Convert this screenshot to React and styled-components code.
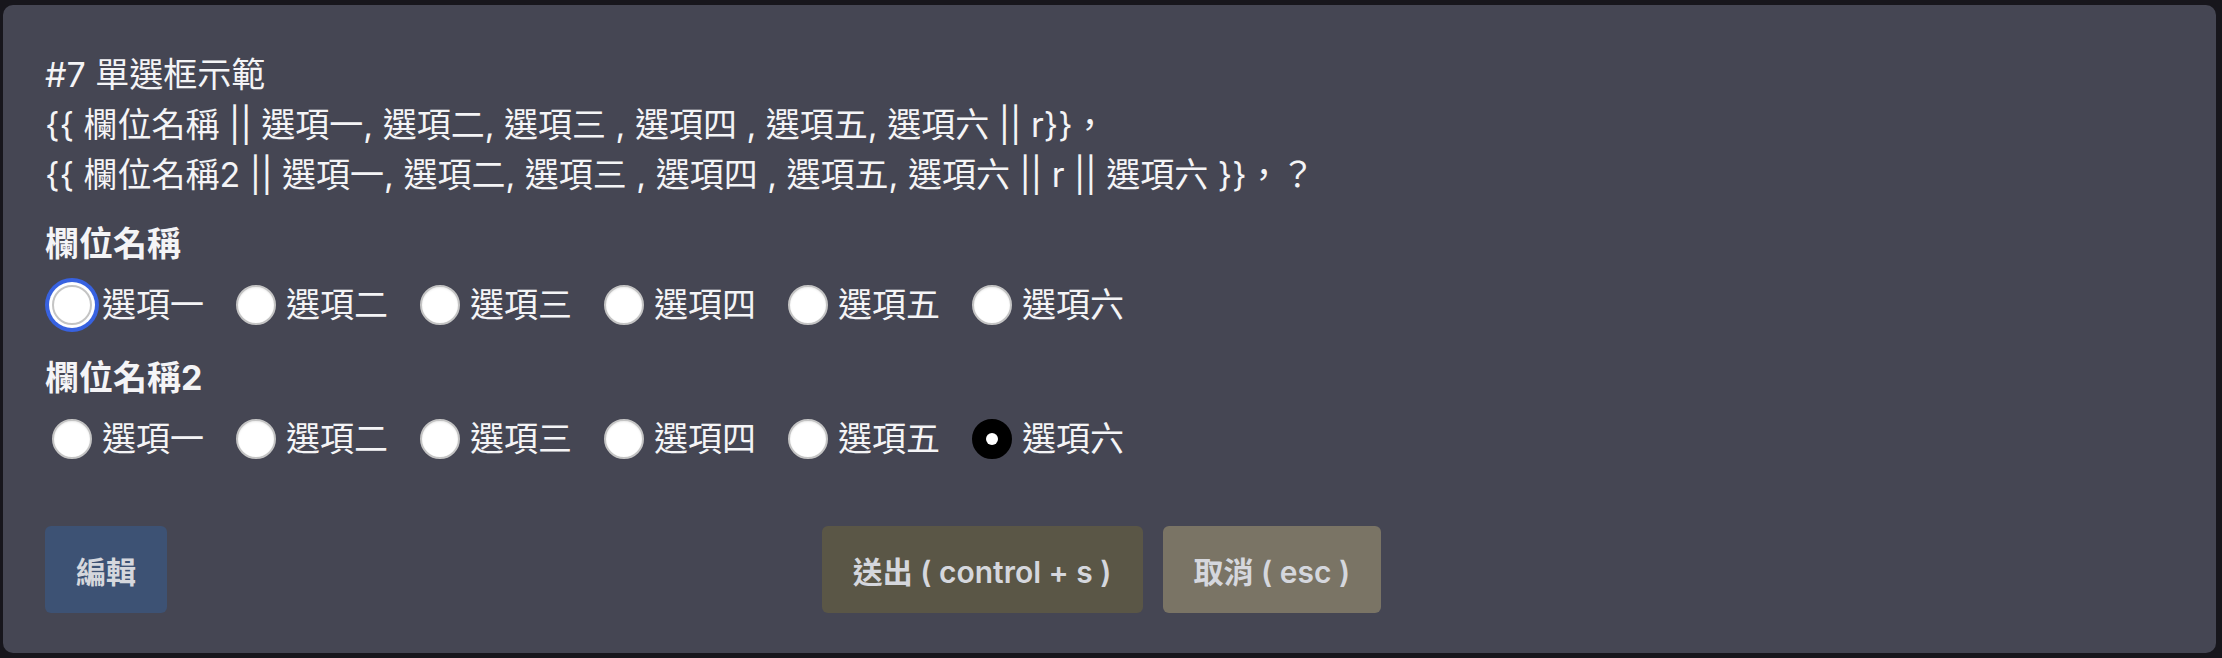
import React from "react";
import styled, { createGlobalStyle } from "styled-components";

const GlobalStyle = createGlobalStyle`
	html, body {
		margin: 0;
		padding: 0;
		background: #17161c;
	}
	body {
		font-family: Inter, "Noto Sans CJK TC", "Noto Sans", sans-serif;
	}
`;

const Page = styled.div`
	height: 658px;
	padding: 5px 6px 5px 3px;
	box-sizing: border-box;
`;

const Panel = styled.div`
	height: 100%;
	box-sizing: border-box;
	background: #454653;
	border-radius: 10px;
	padding: 45px 42px 41px 42px;
	display: flex;
	flex-direction: column;
	color: #f4f4f6;
`;

const Line = styled.div`
	font-size: 34px;
	line-height: 50px;
	white-space: pre;
`;

const FieldLabel = styled.div`
	font-size: 34px;
	line-height: 50px;
	font-weight: 700;
	margin-top: ${(p) => p.$top}px;
`;

const RadioRow = styled.div`
	display: flex;
	align-items: center;
	height: 50px;
	margin-top: 11px;
`;

const Option = styled.label`
	display: flex;
	align-items: center;
	margin-right: 25px;
	font-size: 34px;
	line-height: 50px;
`;

const Radio = styled.input`
	appearance: none;
	margin: 0 10px 0 7px;
	width: 40px;
	height: 40px;
	border-radius: 50%;
	box-sizing: border-box;
	background: #ffffff;
	border: 2px solid #c4c4c4;
	box-shadow: ${(p) =>
		p.$focused ? "0 0 0 3px #ffffff, 0 0 0 7px #3862e0" : "inset 0 1px 2px rgba(0,0,0,0.08)"};
	display: grid;
	place-items: center;

	&:checked {
		background: #000000;
		border-color: #000000;
	}
	&:checked::after {
		content: "";
		width: 12px;
		height: 12px;
		border-radius: 50%;
		background: #ffffff;
	}
`;

const Actions = styled.div`
	display: grid;
	grid-template-columns: 1fr auto 1fr;
	align-items: center;
	margin-top: 62px;
`;

const ButtonGroup = styled.div`
	display: flex;
	gap: 20px;
	margin-left: -16px;
`;

const Button = styled.button`
	height: 87px;
	padding: 0 31px;
	border: none;
	border-radius: 6px;
	background: ${(p) => p.$bg};
	color: #d5d7dd;
	font-family: Inter, "Noto Sans CJK TC", sans-serif;
	font-size: 30px;
	font-weight: 600;
	white-space: pre;
	justify-self: ${(p) => p.$self || "auto"};
`;

const options = ["選項一", "選項二", "選項三", "選項四", "選項五", "選項六"];

const Field = ({ name, label, top, checked, focused }) => (
	<>
		<FieldLabel $top={top}>{label}</FieldLabel>
		<RadioRow>
			{options.map((opt, i) => (
				<Option key={opt}>
					<Radio
						type='radio'
						name={name}
						defaultChecked={checked === i}
						$focused={focused === i}
					/>
					{opt}
				</Option>
			))}
		</RadioRow>
	</>
);

const App = () => {
	return (
		<Page>
			<GlobalStyle />
			<Panel>
				<Line>#7 單選框示範</Line>
				<Line>{"{{ 欄位名稱 || 選項一, 選項二, 選項三 , 選項四 , 選項五, 選項六 || r}}，"}</Line>
				<Line>{"{{ 欄位名稱2 || 選項一, 選項二, 選項三 , 選項四 , 選項五, 選項六 || r || 選項六 }}，？"}</Line>
				<Field name='f1' label='欄位名稱' top={19} focused={0} />
				<Field name='f2' label='欄位名稱2' top={23} checked={5} />
				<Actions>
					<Button $bg='#3d5274' $self='start'>編輯</Button>
					<ButtonGroup>
						<Button $bg='#5a5646'>送出 ( control + s )</Button>
						<Button $bg='#7a7465'>取消 ( esc )</Button>
					</ButtonGroup>
					<div />
				</Actions>
			</Panel>
		</Page>
	);
};

export default App;
